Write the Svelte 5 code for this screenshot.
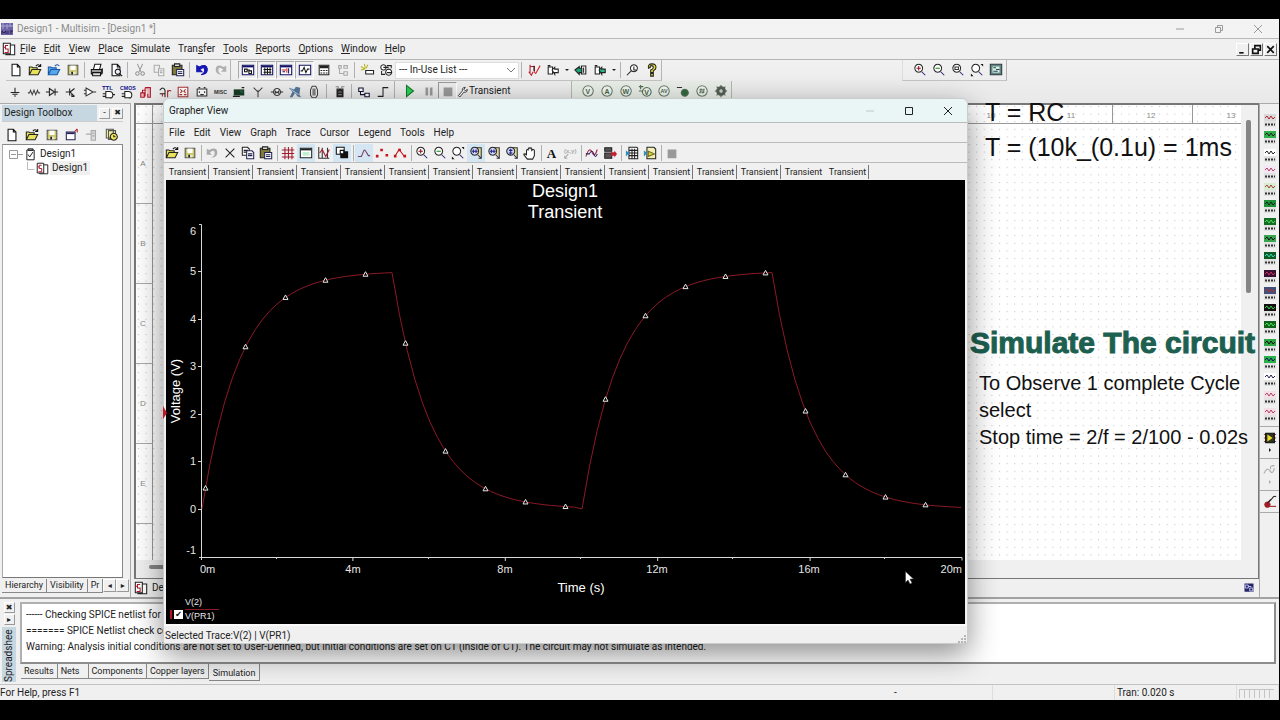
<script lang="ts">
	type Shape = [d: string, fill: string, stroke?: string];
	type Label = [x: number, y: number, size: number, fill: string, text: string];

	const LENS = 'M6.5 1.5a4.5 4.5 0 1 0 .1 0z';
	const HANDLE = 'M10 10l4 4';
	const PAGE = 'M3.5 1.5h6l3 3v10h-9z M9.5 1.5v3h3';
	const FOLDER = 'M1.5 13.5v-9h3l1 1h5v2M1.5 13.5l3-6h10l-3 6z';
	const ring = 'M8 2a6 6 0 1 0 .1 0z';

	// All glyphs live on a 16x16 grid.
	const icons: Record<string, Shape[]> = {
		new: [[PAGE, '#fff', '#111']],
		open: [[FOLDER, '#e8e25a', '#222'], ['M9 3.5q3-3 5 0M14.5 1v3h-3', 'none', '#111']],
		openBlue: [[FOLDER, '#55a6ea', '#1757a5'], ['M9 3.5q3-3 5 0', 'none', '#1757a5']],
		save: [['M2.500 2.500h11v11h-11z', '#c9c66b', '#555'], ['M5 3h6v5h-6z', '#fff'], ['M5 10h6v3h-6z', '#e9e9c8'], ['M6 10h2v3h-2z', '#222']],
		print: [['M4 7l1.500-5.500h7l-1.500 5.500', '#fff', '#111'], ['M1.500 7.500h12v5h-12z', '#9a9a9a', '#111'], ['M3 11h9v3.500h-9z', '#ddd', '#111'], ['M14 6v6', 'none', '#111']],
		preview: [[PAGE, '#fff', '#111'], ['M10 7a3 3 0 1 0 .1 0z', '#eef', '#111'], ['M12 12l3 3', 'none', '#111']],
		cut: [['M5 1l4 9M11 1l-4 9', 'none', '#999'], ['M5 10a2 2 0 1 0 .1 0zM11 10a2 2 0 1 0 .1 0z', 'none', '#999']],
		copyGrey: [['M2.500 2.500h6v8h-6z', '#eee', '#aaa'], ['M7.500 6.500h6v8h-6zM9 9h3M9 11h3', '#f4f4f4', '#aaa']],
		copy: [['M1.500 1.500h6l2 2v7h-8zM3 5h5M3 7h5', '#fff', '#222'], ['M6.500 5.500h6l2 2v7h-8zM8 9h5M8 11h5', '#fff', '#225']],
		paste: [['M1.500 2.500h11v11h-11z', '#7d7a3c', '#222'], ['M4 1h6v3h-6z', '#ddd', '#222'], ['M6.500 7.500h8v7h-8zM8 10h5M8 12h5', '#fff', '#225']],
		undo: [['M2 3v7h6l-2.500-2.500q5-4 5.500 0t-4 6q8-1 7-7t-9-2z', '#1515b5', '#1515b5']],
		undoGrey: [['M2 3v7h6l-2.500-2.500q5-4 5.500 0t-4 6q8-1 7-7t-9-2z', '#aaa']],
		redo: [['M14 3v7h-6l2.500-2.500q-5-4-5.500 0t4 6q-8-1-7-7t9-2z', '#b0b0b0']],
		toolbox: [['M1.500 2.500h13v11h-13z', '#fff', '#116'], ['M2 3h12v2h-12z', '#116'], ['M4 7h3v3h-3zM9 9h3v3h-3zM7 8h3', 'none', '#111']],
		sheet: [['M1.500 2.500h13v11h-13z', '#fff', '#116'], ['M2 3h12v2h-12z', '#116'], ['M4 7.500h9M4 10.500h9M5.500 5v8M8.500 5v8M11.500 5v8', 'none', '#111']],
		netlist: [['M1.500 2.500h13v11h-13z', '#fff', '#116'], ['M2 3h12v2h-12z', '#116'], ['M3 8h5M9 6v5', 'none', '#c22'], ['M11 6v6M4 10h3', 'none', '#116']],
		scope: [['M1.500 2.500h13v11h-13z', '#fff', '#116'], ['M3 9h2l2-4 2 6 2-4h2', 'none', '#111']],
		calc: [['M2.500 2.500h11v11h-11z', '#fff', '#222'], ['M3 3h10v3h-10z', '#222'], ['M4 8.500h2M7 8.500h2M10 8.500h2M4 11.500h2M7 11.500h2M10 11.500h2', 'none', '#222']],
		hierarchy: [['M3 3h3v3h-3zM9 3h4v3h-4zM9 10h4v4h-4zM4 6v6h5', '#eee', '#aaa']],
		wand: [['M1 4l5 3M5 1l1 5M9 2l-2 4M1 8l4-1', 'none', '#b6b41a'], ['M6.500 8.500h9v4h-9z', '#fff', '#222']],
		database: [['M5 2a3 3 0 1 0 .1 0zM11 7a3.500 3.500 0 1 0 .1 0zM9 3h5v3M3 9v4h4M5 5h6M9 11h5', '#fff', '#222']],
		erc: [['M3.500 2v9M3.500 4h5v6M2 10l3 4 2-4', 'none', '#b01c2c'], ['M8 10l2 2 5-9', 'none', '#d01c2c'], ['M8 3v6', 'none', '#222']],
		forward: [['M2.500 4.500h5v8h-5zM2 3h3', '#fff', '#222'], ['M7 8l3-3v2h4v4h-4v2z', '#fff', '#222']],
		back: [['M8.500 3.500h5v9h-5zM11 5v6', '#fff', '#222'], ['M1 8l5-4v2h3v5h-3v2z', '#1da06f', '#222']],
		forwardTeal: [['M2.500 4.500h5v8h-5zM2 3h3', '#fff', '#222'], ['M7 8l3-3v2h4v4h-4v2z', '#25b88a', '#222']],
		find: [['M9 2a4 4 0 1 0 .1 0z', '#fff', '#222'], ['M6 9l-5 5M9 4v4h3', 'none', '#222']],
		help: [['M4 6q-1-5 4-5t4.500 4.500q0 2-3 3.500v2h-3v-3q3-1 3-3t-2-2-1.500 2zM6.500 12h3v3h-3z', '#e6df2c', '#222']],
		ground: [['M8 3v5M3 8.500h10M5 10.500h6M7 12.500h2', 'none', '#222']],
		resistor: [['M1 9h2l1-3 2 5 2-5 2 5 2-5 1 3h2', 'none', '#444']],
		diode: [['M1 8h4M11 8h4M11.500 4v8', 'none', '#222'], ['M5 4l6 4-6 4z', '#ddd', '#222']],
		transistor: [['M2 8h4M6.500 4v8M7 8l5-4M7 8l5 5M9 10v3h3', 'none', '#222']],
		opamp: [['M3.500 3.500l8 4.500-8 4.500zM1 6h3M1 10h3M11 8h4', '#fff', '#333']],
		ttl: [['M5.500 7.500h4q4 0 4 4t-4 3h-4zM2 10h3M2 13h3M13 11h3', '#fff', '#222']],
		cmos: [['M5.500 7.500h4q4 0 4 4t-4 3h-4zM2 10h3M2 13h3', '#fff', '#222']],
		mixed: [['M2 9h4v5h-4zM7 3v10M7 3h6v11h-3v-4', '#e9b8b8', '#b3182a'], ['M4 9v-3h3', 'none', '#b3182a']],
		analog: [['M2 6q4-5 6 0v8M2 10h6', 'none', '#222'], ['M5 9v4M11 6v8M11 8q2-3 4-1', 'none', '#a22']],
		display: [['M2.500 2.500h11v11h-11z', '#fff', '#a33'], ['M5 5l2 2-2 2M11 5l-2 2 2 2M4 11h3M9 11h3', 'none', '#a33']],
		power: [['M2.500 4.500h11v8h-11z', '#fff', '#333'], ['M5 7v2M11 7v2M6 11h4M4 3h2M10 3h2', 'none', '#333']],
		misc: [],
		periph: [['M2 5h12v7h-12z', '#183c24'], ['M1 13h8M11 3h3', 'none', '#222'], ['M9 6h4v3h-4z', '#25543a']],
		antenna: [['M8 14v-8M3 3l5 5 5-5', 'none', '#444']],
		motor: [['M8 4a4 4 0 1 0 .1 0zM1 8h3M12 8h3M6 10v-3l2 2 2-2v3', '#fff', '#333']],
		ni: [['M1 3l6 2 2-3 5 1-1 8 2 3-4-1-3-4-3 5h-3l3-6z', '#55779a'], ['M3 5l9 6', 'none', '#bcd']],
		connector: [['M6 1.500h4l2 4v6l-2 3h-4l-2-3v-6zM7 4v8M9 4v8', '#eee', '#444']],
		mcu: [['M4 4h8v10h-8z', '#222'], ['M3 2h3v3M13 2h-3v3M6 8h4M6 11h4', 'none', '#888']],
		block: [['M2 3.500h5v4h-5zM9 9.500h5v4h-5zM4 8v3h5', '#fff', '#113']],
		bus: [['M2 13h6v-10h6', 'none', '#222']],
		play: [['M4 1.500l8 6.500-8 6.500z', '#2ccf55', '#127a2b']],
		pause: [['M4 4h3v9h-3zM9 4h3v9h-3z', '#999']],
		stop: [['M3 4h10v10h-10z', '#999']],
		wrench: [['M2 14l6-7q-1-5 4-5l-2 3 2 2 3-2q0 5-5 4l-6 7z', '#fff', '#222']],
		gear: [['M8 3a5 5 0 1 0 .1 0zM8 1v14M1 8h14M3 3l10 10M13 3l-10 10', '#556055', '#556055'], ['M8 6a2 2 0 1 0 .1 0z', '#ccc']],
		probe: [[ring, '#f0f5f0', '#6b7d6b']],
		probePulse: [[ring, '#f0f5f0', '#6b7d6b'], ['M5 10h1v-4h2v4h2v-4h1', 'none', '#567056']],
		probeDiff: [['M10 4a5 5 0 1 0 .1 0zM1 3h5M3 1v5M1 8h4', '#eef5ee', '#526c52']],
		probeRef: [['M10 6a4 4 0 1 0 .1 0z', '#2f6b3d', '#556b55'], ['M1 4h6', 'none', '#333']],
		zoomIn: [[LENS, '#fff', '#222'], [HANDLE, 'none', '#22227a'], ['M4 6h5M6.500 3.500v5', 'none', '#8c1020']],
		zoomOut: [[LENS, '#fff', '#222'], [HANDLE, 'none', '#22227a'], ['M4 6h5', 'none', '#168c20']],
		zoomArea: [[LENS, '#fff', '#222'], [HANDLE, 'none', '#22227a'], ['M4.500 4.500h4v3h-4z', 'none', '#333']],
		zoomFit: [[LENS, '#fff', '#222'], [HANDLE, 'none', '#22227a'], ['M12 1h3v3zM1 12v3h3z', '#111']],
		zoomX: [['M8 2h6v12h-3', '#e8df9d', '#333'], [LENS, '#cfd7fa', '#222'], ['M10 10l4 4M3 6h7M5 4v4M8 4v4', 'none', '#22227a']],
		zoomY: [['M8 2h6v12h-3', '#e8df9d', '#333'], [LENS, '#cfd7fa', '#222'], ['M10 10l4 4M6.500 3v7M4.500 5h4M4.500 8h4', 'none', '#22227a']],
		fullscreen: [['M1.500 1.500h13v12h-13z', '#5c8a80', '#334'], ['M4 4h8v7h-8z', '#d8efe6'], ['M5 5.500h3M8 7.500h4M5 9.500h5', 'none', '#245']],
		cross: [['M3 3l10 10M13 3l-10 10', 'none', '#222']],
		grid: [['M1 4.500h14M1 8.500h14M1 12.500h14M4.500 1v14M8.500 1v14M12.500 1v14', 'none', '#a01c2c']],
		legend: [['M1.500 2.500h13v11h-13z', '#fff', '#222'], ['M2 3h12v2h-12z', '#222'], ['M4 7h8v4h-8z', '#bdeed0']],
		axes: [['M2 1v13h12M6 2v12M12 2v12', 'none', '#333'], ['M3 8l3-4 4 8 4-8', 'none', '#a02030']],
		invert: [['M1.500 1.500h9v8h-9z', '#fff', '#111'], ['M6 6h9v8h-9z', '#111'], ['M6 5h4v4h-4z', '#fff', '#111']],
		line: [['M1 12h4l3-7q1-1 2 1l3 5h2', 'none', '#7b4068']],
		dots: [['M1 10h3v3h-3zM6 3h3v3h-3zM12 9h3v3h-3z', '#c4141c']],
		lineDots: [['M2 12l5-8 6 8', 'none', '#c4141c'], ['M1 10h3v3h-3zM6 3h3v3h-3zM12 10h3v3h-3z', '#c4141c']],
		hand: [['M4 9v-4q1-2 2 0v-2q1-2 2 0v0q1-2 2 0v2q2-2 3 0v6l-2 4h-6l-4-5q0-2 3 0z', '#fff', '#222']],
		textA: [],
		coords: [['M2 14l4-5M2 11v3h3', 'none', '#aaa']],
		overlay: [['M1 12q4-12 7-5t6-3', 'none', '#b02040'], ['M1 9h4q3-6 5 0t4 0', 'none', '#226']],
		rack: [['M2 2h8v4h-8zM2 8h8v6h-8z', '#555', '#222'], ['M9 7h4v-2l3 4-3 4v-2h-4z', '#c41c2c']],
		excel: [['M4.500 1.500h9l1 1v12h-10zM5 5h9M5 8h9M5 11h9M8 3v11M11 3v11', '#fff', '#222'], ['M1 5l4 3-4 4z', '#2b8fc0']],
		labview: [['M4.500 1.500h8l2 2v11h-10z', '#f4efb2', '#222'], ['M1 5l4 3-4 4z', '#2b8fc0'], ['M6 6l7 3-7 3z', '#e6d520', '#663']],
		design: [['M1.500 1.500h8v12h-8zM9.500 3.500h5v11h-10v-1', '#fff', '#222'], ['M7 4h-3v4h3v4h-4M2 6h2', 'none', '#b01c2c']],
		checkDoc: [['M3.500 2.500h9v12h-9zM5 1h6v2h-6z', '#fff', '#222'], ['M5 8l2 3 4-6', 'none', '#222']],
		rename: [['M1.500 4.500h10v9h-10z', '#fff', '#225'], ['M2 5h9v2h-9z', '#225'], ['M11 4l3-3M14 5v-4', 'none', '#a22']],
		treeGrey: [['M7 3h5v11h-5zM1 7h6M8 6h3M8 9h3', '#ddd', '#aaa']],
		history: [['M1.500 1.500h8v10h-8zM4 3h8v10h-8z', '#f1efa4', '#555'], ['M10 6a4 4 0 1 0 .1 0zM10 8v2h2', '#f3ea5a', '#222']],
		chip: [['M1 4h14M1 8h14M1 12h14', 'none', '#a44'], ['M3 2.500h10v11h-10z', '#2b3322', '#111'], ['M5 4l6 4-6 4z', '#f0dc28']],
		clamp: [['M1 12q4-8 7-3t5-3M9 7q-2-4 4-4', 'none', '#aaa']],
		probeRed: [['M5 8a3 3 0 1 0 .1 0z', '#a31c24', '#922'], ['M7 8l5-6q2-1 3 0M5 9l4-4', 'none', '#222'], ['M6 13h9', 'none', '#922']],
		windows: [['M2 2h12v11h-12z', '#252566'], ['M3 4h4v4h-4zM9 8h4v4h-4zM7 6h4', 'none', '#cfd0ff']]
	};

	const labels: Record<string, Label> = {
		ttl: [1, 6, 7, '#14148c', 'TTL'],
		cmos: [0, 6, 6, '#14148c', 'CMOS'],
		misc: [0, 10, 6, '#333', 'MISC'],
		textA: [2, 14, 15, '#111', 'A'],
		coords: [1, 8, 7, '#aaa', '(x,y)'],
		probeV: [5, 11, 8, '#4a664a', 'V'],
		probeA: [5, 11, 8, '#4a664a', 'A'],
		probeW: [4, 11, 8, '#4a664a', 'W'],
		probeDiff: [7, 12, 8, '#3d5a3d', 'V'],
		probeAV: [4, 10, 6, '#4a664a', 'AV']
	};

	const menus = ['File', 'Edit', 'View', 'Place', 'Simulate', 'Transfer', 'Tools', 'Reports', 'Options', 'Window', 'Help'];
	const accessKeys: Record<string, number> = { Transfer: 4 };
	const grapherMenus = ['File', 'Edit', 'View', 'Graph', 'Trace', 'Cursor', 'Legend', 'Tools', 'Help'];

	const standardBar = ['new', 'open', 'openBlue', 'save', '|', 'print', 'preview', '|', 'cut', 'copyGrey', 'paste', '|', 'undo', 'redo'];
	const mainBar = ['toolbox*', 'sheet*', 'netlist*', 'scope*', 'calc', 'hierarchy', '|', 'wand', 'database'];
	const componentBar = ['ground', 'resistor', 'diode', 'transistor', 'opamp', 'ttl', 'cmos', 'mixed', 'analog', 'display', 'power', 'misc', 'periph', 'antenna', 'motor', 'ni', 'connector'];
	const probeBar = ['probeV', 'probeA', 'probeW', 'probeDiff', 'probeAV', 'probeRef', 'probePulse', 'gear'];
	const zoomBar = ['zoomIn', 'zoomOut', 'zoomArea', 'zoomFit', 'fullscreen'];
	const toolboxBar = ['new', 'open', 'save', 'rename', 'treeGrey', 'history'];
	const grapherBar = [
		'open', 'save', '|', 'undoGrey', 'cross', 'copy', 'paste', '|',
		'grid', 'legend*', 'axes', 'invert*', '|', 'line*', 'dots', 'lineDots', '|',
		'zoomIn', 'zoomOut', 'zoomFit', 'zoomX*', 'zoomX', 'zoomY', 'hand', '|',
		'textA', 'coords', '|', 'overlay', 'rack', '|', 'excel', 'labview', '|', 'stop'
	];

	// Screen and lower-panel colours of each bench instrument
	const instruments = [
		['Multimeter', '#d9d9d9', '#b02030'], ['Function generator', '#2fae4b', '#222'],
		['Wattmeter', '#fff', '#222'], ['Oscilloscope', '#f3e6f4', '#b04060'],
		['Four channel oscilloscope', '#d8ecd2', '#a04040'], ['Bode plotter', '#1f8f3a', '#222'],
		['Frequency counter', '#146e22', '#4fd95e'], ['Word generator', '#39a64f', '#111'],
		['Logic converter', '#0d5c24', '#37d8c0'], ['Logic analyzer', '#3a1030', '#c83060'],
		['IV analyzer', '#43507c', '#a33'], ['Distortion analyzer', '#111', '#35d04d'],
		['Spectrum analyzer', '#11631c', '#48e058'], ['Network analyzer', '#2da544', '#111'],
		['Agilent function generator', '#2ab04a', '#115'], ['Agilent multimeter', '#fff', '#225'],
		['Agilent oscilloscope', '#f3dfe6', '#b04060'], ['Tektronix oscilloscope', '#f3dfe6', '#b04060']
	];

	const sheetTabs = ['Results', 'Nets', 'Components', 'Copper layers', 'Simulation'];
	const rulerNumbers = [10, 11, 12, 13];
	const rulerLetters = ['A', 'B', 'C', 'D', 'E'];

	let activeTab = $state(15);
	let traceShown = $state(true);

	// RC response to a 100 Hz, 5 V square wave; t in ms, tau = 1 ms
	function voltage(t: number) {
		const phase = t % 10;
		return phase <= 5 ? 5 * (1 - Math.exp(-phase)) : 4.97 * Math.exp(-(phase - 5));
	}

	const px = (t: number) => 202 + 38 * t;
	const py = (v: number) => 509 - 47.6 * v;

	const samples = Array.from({ length: 100 }, (_, i) => i * 0.2).concat(19.98);
	const trace = samples.map((t) => `${px(t).toFixed(1)},${py(voltage(t)).toFixed(1)}`).join(' ');
	const markers = Array.from({ length: 19 }, (_, i) => {
		const x = 205.5 + i * 40;
		return { x, y: py(voltage((x - 202) / 38)) };
	});
	const yTicks = [5, 4, 3, 2, 1, 0];
	const xTicks = [4, 8, 12, 16];
</script>

{#snippet icon(name: string)}
	<svg class="icon" viewBox="0 0 16 16" aria-hidden="true">
		{#each icons[name] ?? icons.probe as [d, fill, stroke]}
			<path {d} {fill} {stroke} />
		{/each}
		{#if labels[name]}
			{@const [x, y, size, fill, text] = labels[name]}
			<text {x} {y} {fill} font-size={size} class:serif={name === 'textA'}>{text}</text>
		{/if}
	</svg>
{/snippet}

{#snippet tools(items: string[])}
	{#each items as item}
		{#if item === '|'}
			<span class="sep"></span>
		{:else}
			{@const name = item.replace('*', '')}
			<button type="button" class="tool" class:on={item.endsWith('*')} aria-label={name}>
				{@render icon(name)}
			</button>
		{/if}
	{/each}
{/snippet}

<div class="app">
	<header class="titlebar">
		<svg class="logo" viewBox="0 0 12 12" aria-hidden="true">
			<rect width="12" height="12" fill="#6a62a4" />
			<path d="M0 3h12M2 0v6M6 1v5M9 0v4" stroke="#a9a5d4" />
			<path d="M1 11v-3l2 2 2-2v3M7 8v3M9 8h3M10 8v3" stroke="#2c2357" fill="none" />
		</svg>
		<h1>Design1 - Multisim - [Design1 *]</h1>
		<div class="caption-buttons dim">
			<button type="button" aria-label="Minimize"><svg viewBox="0 0 10 10"><path d="M1 5h8" /></svg></button>
			<button type="button" aria-label="Restore"><svg viewBox="0 0 10 10"><path d="M1.500 3.500h5v5h-5zM3.500 3v-1.500h5v5h-2" /></svg></button>
			<button type="button" aria-label="Close"><svg viewBox="0 0 10 10"><path d="M1 1l8 8M9 1l-8 8" /></svg></button>
		</div>
	</header>

	<nav class="menubar">
		{@render icon('design')}
		{#each menus as menu}
			{@const key = accessKeys[menu] ?? 0}
			<button type="button">{menu.slice(0, key)}<u>{menu[key]}</u>{menu.slice(key + 1)}</button>
		{/each}
		<div class="mdi-buttons">
			<button type="button" aria-label="Minimize document"><svg viewBox="0 0 10 10"><path d="M2 8h4" /></svg></button>
			<button type="button" aria-label="Restore document"><svg viewBox="0 0 10 10"><path d="M1.500 4.500h5v4h-5zM3.500 4v-2.500h5v4h-2" /></svg></button>
			<button type="button" aria-label="Close document"><svg viewBox="0 0 10 10"><path d="M2 2l6 6M8 2l-6 6" /></svg></button>
		</div>
	</nav>

	<div class="toolbars">
		<div class="toolrow">
			<div class="bar">{@render tools(standardBar)}</div>
			<div class="bar wide">
				{@render tools(mainBar)}
				<select aria-label="In-use list"><option>--- In-Use List ---</option></select>
				{@render tools(['|', 'erc', 'forward'])}
				<span class="caret"></span>
				{@render tools(['back', 'forwardTeal'])}
				<span class="caret"></span>
				{@render tools(['|', 'find', 'help'])}
			</div>
			<div class="bar zoom">{@render tools(zoomBar)}</div>
		</div>
		<div class="toolrow">
			<div class="bar components">{@render tools(componentBar)}</div>
			<span class="sep far"></span>
			{@render tools(['mcu', '|', 'block', 'bus'])}
			<div class="bar run">
				{@render tools(['play', 'pause', 'stop'])}
				<button type="button" class="analysis">{@render icon('wrench')}Transient</button>
			</div>
			<div class="bar probes">{@render tools(probeBar)}</div>
		</div>
	</div>

	<main class="workspace">
		<aside class="toolbox">
			<div class="toolbox-head">
				<h2>Design Toolbox</h2>
				<button type="button" class="mini" aria-label="Collapse">-</button>
				<button type="button" class="mini" aria-label="Close toolbox">✖</button>
			</div>
			<div class="toolbox-bar">{@render tools(toolboxBar)}</div>
			<div class="tree">
				<div class="node">
					<svg class="expander" viewBox="0 0 14 9"><path d="M.5.5h8v8h-8zM2 4.500h5M9 4.500h5" /></svg>
					{@render icon('checkDoc')}<span>Design1</span>
				</div>
				<div class="node child">
					<svg class="elbow" viewBox="0 0 8 12"><path d="M.5 0v7.500h7" /></svg>
					{@render icon('design')}<span class="picked">Design1</span>
				</div>
			</div>
			<div class="toolbox-tabs">
				<button type="button" class="active">Hierarchy</button>
				<button type="button">Visibility</button>
				<button type="button" class="cut">Pr</button>
				<button type="button" class="mini" aria-label="Scroll tabs left">◂</button>
				<button type="button" class="mini" aria-label="Scroll tabs right">▸</button>
			</div>
		</aside>

		<section class="document">
			<div class="canvas">
				<svg class="sheet" aria-hidden="true">
					<defs>
						<pattern id="dots" width="7.620" height="7.600" patternUnits="userSpaceOnUse">
							<rect x="2" y="1" width="1" height="1" fill="#bbb" />
						</pattern>
					</defs>
					<rect width="100%" height="100%" fill="#fff" />
					<rect width="100%" height="100%" fill="url(#dots)" />
					<path d="M0 18.500h1200M16.500 0v500" stroke="#999" />
					{#each rulerNumbers as n, i}
						<text x={855 + i * 80} y="13" text-anchor="middle">{n}</text>
						<path d="M{896.5 + i * 80} 0v18" stroke="#999" />
					{/each}
					{#each rulerLetters as letter, i}
						<text x="7" y={61 + i * 80} text-anchor="middle">{letter}</text>
						<path d="M0 {98.5 + i * 80}h16" stroke="#aaa" />
					{/each}
				</svg>
				<div class="note formula">
					<p>T = RC</p>
					<p>T = (10k_(0.1u) = 1ms</p>
				</div>
				<div class="note steps">
					<h3>Simulate The circuit</h3>
					<p>To Observe 1 complete Cycle<br />select<br />Stop time = 2/f = 2/100 - 0.02s</p>
				</div>
				<div class="vscroll"><i></i></div>
				<div class="hscroll"><i></i></div>
			</div>
			<div class="doc-tabs">
				<button type="button">{@render icon('design')}Design1</button>
				<button type="button" class="tool" aria-label="Windows">{@render icon('windows')}</button>
			</div>
		</section>

		<aside class="instruments">
			<div class="bench">
				{#each instruments as [name, screen, panel]}
					<button type="button" aria-label={name}>
						<svg viewBox="0 0 12 13">
							<rect width="12" height="13" fill="#e2e2e2" />
							<rect width="12" height="7" fill={screen} />
							<path d="M1 4l2-2 2 3 2-3 2 3 2-2" fill="none" stroke={panel} />
							<path d="M1 10.500h10" stroke="#333" stroke-width="2" stroke-dasharray="2 1" />
						</svg>
					</button>
				{/each}
			</div>
			<div class="bench-extra">{@render tools(['chip'])}<i></i></div>
			<div class="bench-extra">{@render tools(['clamp'])}<i class="off"></i></div>
			<div class="bench-extra last">{@render tools(['probeRed'])}</div>
		</aside>
	</main>

	<section class="spreadsheet">
		<div class="grip">
			<button type="button" class="mini" aria-label="Close spreadsheet">✖</button>
			<button type="button" class="mini" aria-label="Expand spreadsheet">▸</button>
			<h2>Spreadshee</h2>
		</div>
		<div class="results">
			<div class="log">
				<p>------ Checking SPICE netlist for Design1 ------</p>
				<p>======= SPICE Netlist check completed =======</p>
				<p>Warning: Analysis initial conditions are not set to User-Defined, but initial conditions are set on C1 (inside of C1). The circuit may not simulate as intended.</p>
			</div>
			<div class="sheet-tabs">
				{#each sheetTabs as tab}
					<button type="button" class:active={tab === 'Simulation'}>{tab}</button>
				{/each}
			</div>
		</div>
	</section>

	<footer class="statusbar">
		<span>For Help, press F1</span>
		<span class="dash">-</span>
		<span></span>
		<span>Tran: 0.020 s</span>
		<span class="meter">{#each { length: 7 } as _}<i></i>{/each}</span>
	</footer>

	<section class="grapher">
		<header>
			<h2>Grapher View</h2>
			<div class="caption-buttons">
				<button type="button" disabled aria-label="Minimize grapher"><svg viewBox="0 0 10 10"><path d="M1 5h8" /></svg></button>
				<button type="button" aria-label="Maximize grapher"><svg viewBox="0 0 10 10"><path d="M1.500 1.500h7v7h-7z" /></svg></button>
				<button type="button" aria-label="Close grapher"><svg viewBox="0 0 10 10"><path d="M1 1l8 8M9 1l-8 8" /></svg></button>
			</div>
		</header>
		<nav class="grapher-menu">
			{#each grapherMenus as menu}<button type="button">{menu}</button>{/each}
		</nav>
		<div class="grapher-bar">{@render tools(grapherBar)}</div>
		<div class="graph-tabs">
			{#each { length: 16 } as _, i}
				<button type="button" class:active={activeTab === i} onclick={() => (activeTab = i)}>Transient</button>
			{/each}
		</div>
		<div class="plot">
			<svg viewBox="166 180 799 416" role="img" aria-label="Voltage over time">
				<path d="M163 406l4 7-4 6z" fill="#c01828" />
				<g class="title">
					<text x="565" y="197">Design1</text>
					<text x="565" y="218">Transient</text>
				</g>
				<path class="axis" d="M199 224.500h2.500v333M199 557.500h763v3M201.500 557v3" />
				{#each yTicks as v}
					<path class="axis" d="M198 {Math.round(py(v)) + 0.5}h3" />
					<text x="196" y={Math.round(py(v)) + 4} class="end">{v}</text>
				{/each}
				<text x="196" y="235" class="end">6</text>
				<text x="196" y="554" class="end">-1</text>
				{#each xTicks as t}
					<path class="axis" d="M{px(t) - 1.5 + t / 10} 557v4M{px(t - 2) - 1.5} 557v2" />
					<text x={px(t) - 1} y="573" class="mid">{t}m</text>
				{/each}
				<path class="axis" d="M884.500 557v2" />
				<text x="200" y="573">0m</text>
				<text x="962" y="573" class="end">20m</text>
				<text x="581" y="592" class="mid name">Time (s)</text>
				<text transform="translate(180 391) rotate(-90)" class="mid name">Voltage (V)</text>
				{#if traceShown}
					<polyline points={trace} />
					{#each markers as { x, y }}
						<path class="marker" d="M{x} {y - 2.5}l2.500 4.500h-5z" />
					{/each}
				{/if}
			</svg>
			<label class="trace-legend">
				<i></i>
				<input type="checkbox" bind:checked={traceShown} />
				<span><b>V(2)</b><b>V(PR1)</b></span>
			</label>
		</div>
		<footer>
			Selected Trace:V(2) | V(PR1)
			<svg class="resize" viewBox="0 0 8 8"><path d="M6 0h2v2h-2zM3 3h2v2h-2zM6 3h2v2h-2zM0 6h2v2h-2zM3 6h2v2h-2zM6 6h2v2h-2z" /></svg>
		</footer>
		<svg class="pointer" viewBox="0 0 9 14" aria-hidden="true">
			<path d="M.5.5v11l2.500-2.500 2 4 2-1-2-4h3.500z" />
		</svg>
	</section>
</div>

<style>
	:global(body) {
		background: #000;
	}
	.app {
		position: relative;
		box-sizing: border-box;
		height: calc(100vh - 39px);
		margin: 19px 1px 20px 0;
		display: flex;
		flex-direction: column;
		background: #f0f0f0;
		color: #222;
		font: 10px/14px Roboto, 'Noto Sans', sans-serif;
		overflow: hidden;
	}
	.app :global(*) {
		box-sizing: border-box;
	}
	h1,
	h2,
	h3,
	p {
		margin: 0;
		font-size: inherit;
		font-weight: 400;
	}
	button {
		padding: 0;
		border: 0;
		background: none;
		color: inherit;
		font: inherit;
		white-space: nowrap;
	}
	.icon {
		display: block;
		flex: none;
		width: 14px;
		height: 14px;
		overflow: visible;
		stroke-width: 1.2;
	}
	.icon text {
		font-family: 'Liberation Sans', sans-serif;
		font-weight: 700;
	}
	.icon .serif {
		font-family: 'Liberation Serif', serif;
	}

	/* title and menu */
	.titlebar {
		flex: none;
		height: 20px;
		display: flex;
		align-items: center;
		gap: 4px;
		padding: 0 2px 0 1px;
		background: #f3f3f3;
		border-bottom: 1px solid #b9b9b9;
		color: #8c8c8c;
	}
	.logo {
		width: 12px;
		height: 12px;
	}
	.caption-buttons {
		display: flex;
		margin-left: auto;
	}
	.caption-buttons button {
		width: 39px;
		height: 18px;
		display: grid;
		place-items: center;
	}
	.caption-buttons svg {
		width: 10px;
		height: 10px;
		fill: none;
		stroke: #222;
	}
	.caption-buttons.dim svg {
		stroke: #9a9a9a;
	}
	.caption-buttons button:disabled svg {
		stroke: #c0c8c8;
	}
	.menubar {
		flex: none;
		height: 21px;
		display: flex;
		align-items: center;
		gap: 8px;
		padding-left: 2px;
		border-bottom: 1px solid #b5b5b5;
	}
	.menubar .icon {
		margin-right: -4px;
	}
	.mdi-buttons {
		display: flex;
		gap: 1px;
		margin-left: auto;
		padding-right: 2px;
	}
	.mdi-buttons button {
		width: 13px;
		height: 13px;
		border: 1px solid;
		border-color: #fff #777 #777 #fff;
	}
	.mdi-buttons svg {
		display: block;
		width: 11px;
		height: 11px;
		fill: none;
		stroke: #111;
		stroke-width: 1.5;
	}

	/* toolbars */
	.toolbars {
		flex: none;
		height: 43px;
		background: linear-gradient(#f1f1f1, #e9e9e9);
	}
	.toolrow {
		height: 21px;
		display: flex;
		align-items: center;
		padding-left: 6px;
	}
	.bar {
		height: 21px;
		display: flex;
		align-items: center;
		border-right: 1px solid #b4b4b4;
		border-bottom: 1px solid #c4c4c4;
	}
	.tool {
		width: 19px;
		height: 18px;
		display: grid;
		place-items: center;
		flex: none;
	}
	.tool.on {
		border: 1px solid;
		border-color: #aaa #fff #fff #aaa;
	}
	.sep {
		flex: none;
		width: 1px;
		height: 16px;
		margin: 0 2px;
		background: #b0b0b0;
	}
	.wide {
		padding-left: 7px;
	}
	.wide select {
		appearance: none;
		width: 124px;
		height: 17px;
		padding: 0 3px;
		border: 1px solid #ddd;
		background-color: #fff;
		background-image: linear-gradient(45deg, transparent 45%, #777 45% 60%, transparent 60%),
			linear-gradient(-45deg, transparent 45%, #777 45% 60%, transparent 60%);
		background-position: right 7px center, right 3px center;
		background-size: 4px 4px;
		background-repeat: no-repeat;
		color: #222;
		font: inherit;
	}
	.caret {
		width: 9px;
		display: grid;
		place-items: center;
	}
	.caret::before {
		content: '';
		border: 2px solid transparent;
		border-top-color: #222;
		border-bottom: 0;
	}
	.bar.zoom {
		margin-left: 240px;
		padding: 0 1px 0 7px;
		border-left: 1px solid #ddd;
	}
	.components {
		width: 317px;
		justify-content: space-between;
		border: 0;
	}
	.components .tool {
		width: 18px;
	}
	.sep.far {
		margin: 0 3px;
	}
	.run {
		width: 178px;
		margin-left: 2px;
		padding-left: 5px;
		border-left: 1px solid #b0b0b0;
	}
	.run .tool:nth-child(3) {
		border: 1px solid;
		border-color: #999 #fff #fff #999;
	}
	.analysis {
		display: flex;
		align-items: center;
		gap: 1px;
	}
	.analysis .icon {
		width: 11px;
		height: 11px;
	}
	.probes {
		padding: 0 1px 0 6px;
		background: #e8eee7;
	}

	/* workspace */
	.workspace {
		flex: 1;
		min-height: 0;
		display: flex;
		border-bottom: 2px solid #a2a2a2;
	}
	.toolbox {
		flex: none;
		width: 131px;
		display: flex;
		flex-direction: column;
		padding: 1px 7px 4px 2px;
		border-top: 1px solid #aaa;
		border-right: 1px solid #aaa;
	}
	.toolbox-head {
		height: 16px;
		display: flex;
		align-items: center;
		gap: 2px;
	}
	.toolbox-head h2 {
		flex: 1;
		padding-left: 2px;
		line-height: 16px;
		background: #c6d7e1;
	}
	.mini {
		width: 11px;
		height: 11px;
		display: grid;
		place-items: center;
		flex: none;
		border: 1px solid;
		border-color: #fff #999 #999 #fff;
		font: 8px/8px 'DejaVu Sans', sans-serif;
	}
	.toolbox-bar {
		height: 23px;
		display: flex;
		align-items: center;
		padding-top: 3px;
		border-top: 1px solid #ccc;
	}
	.toolbox-bar .tool {
		width: 20px;
	}
	.tree {
		flex: 1;
		padding: 2px 4px;
		background: #fff;
		border: 1px solid;
		border-color: #888 #888 #777 #aaa;
	}
	.node {
		height: 14px;
		display: flex;
		align-items: center;
		gap: 3px;
	}
	.expander {
		width: 14px;
		height: 9px;
		margin: 0 -2px 0 2px;
		fill: none;
		stroke: #999;
	}
	.elbow {
		width: 8px;
		height: 12px;
		fill: none;
		stroke: #bbb;
	}
	.node .icon {
		width: 13px;
		height: 13px;
	}
	.child {
		padding-left: 20px;
		gap: 1px;
	}
	.picked {
		padding: 0 2px;
		background: #f0f0f0;
	}
	.toolbox-tabs {
		height: 15px;
		display: flex;
		align-items: center;
		font-size: 9px;
		line-height: 13px;
	}
	.toolbox-tabs button:not(.mini) {
		padding: 0 3px;
		border: 1px solid #888;
		border-top: 0;
		border-left: 0;
	}
	.toolbox-tabs .cut {
		padding-right: 0;
		border-color: transparent;
	}
	.toolbox-tabs .mini {
		width: 13px;
		height: 13px;
	}
	.document {
		flex: 1;
		min-width: 0;
		display: flex;
		flex-direction: column;
		padding-left: 3px;
	}
	.canvas {
		position: relative;
		flex: 1;
		min-height: 0;
		display: grid;
		grid-template: 1fr 18px / 1fr 17px;
		border: 2px solid #777;
		border-width: 2px 1px 1px 2px;
	}
	.sheet {
		width: 100%;
		height: 100%;
	}
	.sheet text {
		font: 8px 'Liberation Sans', sans-serif;
		fill: #888;
	}
	.vscroll i {
		display: block;
		width: 5px;
		height: 173px;
		margin: 15px 0 0 5px;
		border-radius: 2px;
		background: #858585;
	}
	.hscroll i {
		display: block;
		width: 420px;
		height: 4px;
		margin: 5px 0 0 13px;
		border-radius: 2px;
		background: #858585;
	}
	.note {
		position: absolute;
		color: #111;
		font-family: 'Liberation Sans', Arial, sans-serif;
		white-space: nowrap;
	}
	.formula {
		left: 849px;
		top: -10px;
		font-size: 25px;
		line-height: 35px;
	}
	.steps {
		left: 843px;
		top: 221px;
		font-size: 20px;
		line-height: 27px;
	}
	.steps h3 {
		margin-left: -9px;
		font-size: 30px;
		line-height: 34px;
		font-weight: 700;
		color: #1d6050;
		-webkit-text-stroke: 1px #1d6050;
	}
	.steps p {
		margin-top: 10px;
	}
	.doc-tabs {
		height: 18px;
		display: flex;
		justify-content: space-between;
		align-items: center;
	}
	.doc-tabs button {
		display: flex;
		gap: 4px;
	}
	.doc-tabs .tool {
		width: 16px;
	}
	.doc-tabs .tool .icon {
		width: 12px;
		height: 12px;
	}
	.instruments {
		flex: none;
		width: 20px;
		display: flex;
		flex-direction: column;
		align-items: center;
		padding-top: 10px;
		border-left: 1px solid #aaa;
		border-top: 1px solid #aaa;
	}
	.bench {
		height: 307px;
		display: flex;
		flex-direction: column;
		justify-content: space-between;
	}
	.bench button,
	.bench svg {
		display: block;
		width: 12px;
		height: 13px;
	}
	.bench-extra {
		width: 19px;
		height: 32px;
		padding-top: 2px;
		display: flex;
		flex-direction: column;
		align-items: center;
		gap: 1px;
		border-top: 1px solid #aaa;
	}
	.bench + .bench-extra {
		margin-top: 5px;
	}
	.bench-extra.last {
		height: 23px;
		border-bottom: 1px solid #aaa;
	}
	.bench-extra i {
		border: 2px solid transparent;
		border-left-color: #111;
		border-right: 0;
	}
	.bench-extra i.off {
		border-left-color: #aaa;
	}

	/* spreadsheet view */
	.spreadsheet {
		flex: none;
		height: 85px;
		display: flex;
		gap: 4px;
		padding: 3px 3px 2px 2px;
	}
	.grip {
		width: 14px;
		display: flex;
		flex-direction: column;
		align-items: center;
		gap: 1px;
	}
	.grip h2 {
		flex: 1;
		width: 14px;
		margin-top: 1px;
		background: #c6d7e1;
		writing-mode: vertical-rl;
		transform: rotate(180deg);
		line-height: 14px;
		overflow: hidden;
	}
	.results {
		flex: 1;
		min-width: 0;
	}
	.log {
		height: 62px;
		padding: 3px 4px 0;
		background: #fff;
		border: 2px solid;
		border-color: #b0b0b0 #8d8d8d #8d8d8d #b0b0b0;
		line-height: 16px;
		white-space: nowrap;
		overflow: hidden;
	}
	.sheet-tabs {
		display: flex;
		padding-left: 1px;
		font-size: 9px;
		line-height: 14px;
	}
	.sheet-tabs button {
		height: 15px;
		padding: 0 3px;
		border: 1px solid #888;
		border-width: 0 1px 1px 0;
	}
	.sheet-tabs button:nth-child(2) {
		padding-right: 8px;
	}
	.sheet-tabs .active {
		height: 17px;
		padding: 2px 4px 0;
	}
	.statusbar {
		flex: none;
		height: 16px;
		display: grid;
		grid-template-columns: 1fr 196px 122px 122px 42px;
		border-top: 1px solid #c2c2c2;
		line-height: 16px;
	}
	.statusbar span + span {
		padding-left: 2px;
		border-right: 1px solid #ddd;
	}
	.statusbar .dash {
		text-align: center;
	}
	.meter {
		display: flex;
		align-items: center;
	}
	.meter i {
		width: 5px;
		height: 9px;
		border: 1px solid #c4c4c4;
		border-width: 1px 0 0 1px;
	}

	/* grapher window floats above the schematic */
	.grapher {
		position: absolute;
		left: 163px;
		right: 311px;
		top: 79px;
		bottom: 56px;
		display: flex;
		flex-direction: column;
		background: #f0f0f0;
		border: 1px solid #c8cccc;
		border-radius: 6px 6px 2px 2px;
		box-shadow: 0 10px 30px rgb(0 0 0 / 45%);
	}
	.grapher > header {
		flex: none;
		height: 24px;
		display: flex;
		align-items: center;
		padding-left: 5px;
		background: #eaf5f5;
		border-bottom: 1px solid #bbb;
		border-radius: 6px 6px 0 0;
	}
	.grapher-menu {
		flex: none;
		height: 20px;
		display: flex;
		align-items: center;
		gap: 9px;
		padding-left: 5px;
		border-bottom: 1px solid #bbb;
	}
	.grapher-bar {
		flex: none;
		height: 20px;
		display: flex;
		align-items: center;
		margin-left: -1px;
		border-bottom: 1px solid #bbb;
	}
	.grapher-bar .tool {
		width: 18px;
	}
	.grapher-bar .sep {
		margin: 0 1px 0 2px;
	}
	.grapher-bar .on {
		border: 0;
		background: #d3e6f2;
	}
	.graph-tabs {
		flex: none;
		height: 17px;
		display: flex;
		padding: 2px 0 0 1px;
		font-size: 9px;
		line-height: 15px;
	}
	.graph-tabs button {
		width: 44px;
		height: 14px;
		padding-left: 2px;
		border-right: 1px solid #777;
	}
	.graph-tabs button:nth-child(15) {
		border-color: transparent;
	}
	.graph-tabs .active {
		line-height: 12px;
	}
	.plot {
		flex: 1;
		min-height: 0;
		display: flex;
		flex-direction: column;
		margin: 0 2px;
		background: #000;
		color: #e6e6e6;
	}
	.plot > svg {
		flex: 1;
		min-height: 0;
		width: 100%;
		overflow: visible;
	}
	.plot text {
		font: 11px 'Liberation Sans', Arial, sans-serif;
		fill: #e6e6e6;
	}
	.plot .title text {
		font-size: 18px;
		text-anchor: middle;
		fill: #fff;
	}
	.plot .name {
		font-size: 13px;
		fill: #fff;
	}
	.plot .mid {
		text-anchor: middle;
	}
	.plot .end {
		text-anchor: end;
	}
	.axis {
		fill: none;
		stroke: #d8d8d8;
	}
	polyline {
		fill: none;
		stroke: #8c1a26;
	}
	.marker {
		fill: #000;
		stroke: #e8e8e8;
	}
	.trace-legend {
		flex: none;
		height: 28px;
		display: flex;
		align-items: flex-end;
		gap: 2px;
		padding: 0 0 1px 4px;
		font: 9px/13px 'Liberation Sans', Arial, sans-serif;
	}
	.trace-legend i {
		width: 2px;
		height: 9px;
		margin-bottom: 4px;
		background: #b01020;
	}
	.trace-legend input {
		width: 9px;
		height: 9px;
		margin: 0 0 4px;
		appearance: none;
		background: #fff;
	}
	.trace-legend input:checked::before {
		content: '✔';
		display: block;
		color: #000;
		font: 8px/9px 'DejaVu Sans', sans-serif;
		text-align: center;
	}
	.trace-legend b {
		display: block;
		font-weight: 400;
	}
	.trace-legend b + b {
		width: 34px;
		border-top: 1px solid #8c1a26;
	}
	.grapher > footer {
		flex: none;
		height: 19px;
		display: flex;
		align-items: center;
		justify-content: space-between;
		padding: 3px 1px 0;
		border-top: 2px solid #fafafa;
		line-height: 14px;
	}
	.resize {
		align-self: flex-end;
		width: 8px;
		height: 8px;
		fill: #b5b5b5;
	}
	.pointer {
		position: absolute;
		left: 741px;
		top: 472px;
		width: 9px;
		height: 14px;
		fill: #fff;
		stroke: #333;
		stroke-width: 0.5;
	}
</style>
